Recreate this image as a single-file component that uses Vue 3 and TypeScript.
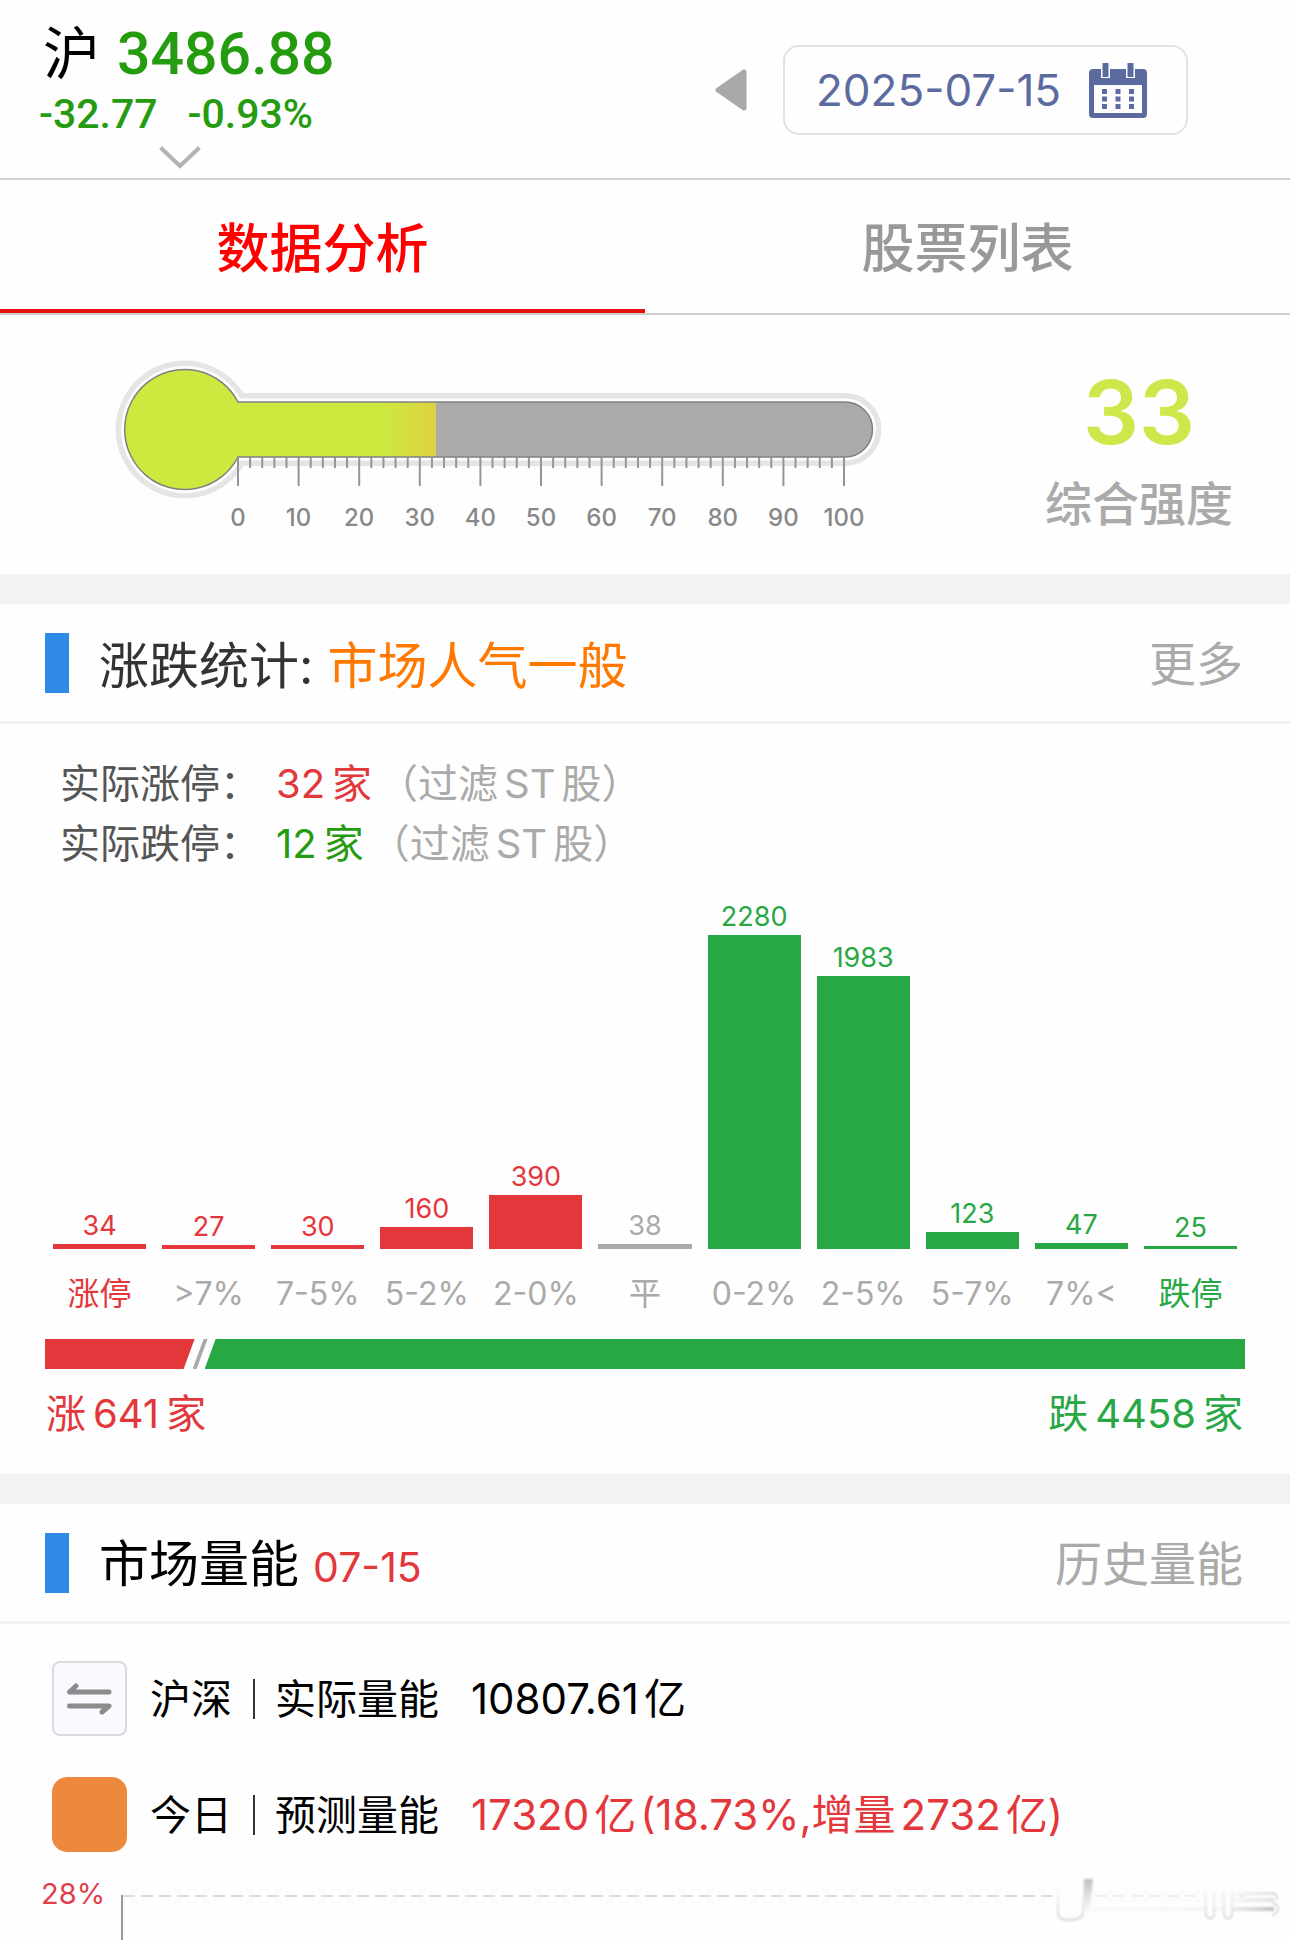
<script setup lang="ts">
import { ref } from 'vue'

type Tone = 'up' | 'down' | 'flat'

interface Bucket {
  label: string
  count: number
  tone: Tone
  edge?: boolean
}

const activeTab = ref(0)
const tabs = ['数据分析', '股票列表']
const tradeDate = ref('2025-07-15')

const buckets: Bucket[] = [
  { label: '涨停', count: 34, tone: 'up', edge: true },
  { label: '>7%', count: 27, tone: 'up' },
  { label: '7-5%', count: 30, tone: 'up' },
  { label: '5-2%', count: 160, tone: 'up' },
  { label: '2-0%', count: 390, tone: 'up' },
  { label: '平', count: 38, tone: 'flat' },
  { label: '0-2%', count: 2280, tone: 'down' },
  { label: '2-5%', count: 1983, tone: 'down' },
  { label: '5-7%', count: 123, tone: 'down' },
  { label: '7%<', count: 47, tone: 'down' },
  { label: '跌停', count: 25, tone: 'down', edge: true },
]
const tallest = 314
const peak = Math.max(...buckets.map((b) => b.count))
const barHeight = (count: number) => `${Math.round((count / peak) * tallest)}px`

const rising = 641
const falling = 4458

// Thermometer scale: 0 to 100 in steps of 2, labelled every 10
const strength = 33
const scaleStart = 123
const scaleLength = 606
const tickX = (value: number) => scaleStart + (value / 100) * scaleLength
const ticks = Array.from({ length: 51 }, (_, i) => i * 2)
const majors = ticks.filter((t) => t % 10 === 0)
const outline = 'M123 57 H730 A27.500 27.500 0 0 1 730 112 H123 A60 60 0 1 1 123 57 Z'
</script>

<template>
  <main class="page">
    <header class="top">
      <section class="index" aria-label="沪">
        <div class="index-main">
          <span class="market">沪</span>
          <strong class="points">3486.88</strong>
        </div>
        <div class="index-sub">
          <span>-32.77</span>
          <span>-0.93%</span>
        </div>
        <button class="expand" type="button" aria-label="展开">
          <svg width="42" height="23" viewBox="0 0 42 23">
            <path d="M1.500 1.500 L21 20 L40.500 1.500" fill="none" stroke="#b3b3b3" stroke-width="4" />
          </svg>
        </button>
      </section>
      <div class="date-nav">
        <button class="prev" type="button" aria-label="前一天">
          <svg width="32" height="42" viewBox="0 0 32 42">
            <path d="M3 21 L29 3 V39 Z" fill="#a9a9a9" stroke="#a9a9a9" stroke-width="5" stroke-linejoin="round" />
          </svg>
        </button>
        <label class="date-box">
          <input v-model="tradeDate" class="date-input" type="text" aria-label="日期" readonly />
          <svg width="58" height="55" viewBox="0 0 58 55">
            <rect x="0" y="6" width="58" height="49" rx="4" fill="#5b6b9f" />
            <rect x="5" y="22" width="48" height="28" fill="#fefefe" />
            <rect x="12" y="0" width="9" height="15" fill="#fefefe" />
            <rect x="37" y="0" width="9" height="15" fill="#fefefe" />
            <rect x="13.500" y="0" width="6" height="14" fill="#5b6b9f" />
            <rect x="38.500" y="0" width="6" height="14" fill="#5b6b9f" />
            <g fill="#5b6b9f">
              <template v-for="row in 3" :key="row">
                <rect v-for="col in 3" :key="col" :x="13 + (col - 1) * 13.500" :y="26 + (row - 1) * 7.500" width="5" height="5" />
              </template>
            </g>
          </svg>
        </label>
      </div>
    </header>

    <nav class="tabs" role="tablist">
      <button
        v-for="(tab, i) in tabs"
        :key="tab"
        type="button"
        role="tab"
        class="tab"
        :class="{ active: i === activeTab }"
        :aria-selected="i === activeTab"
        @click="activeTab = i"
      >
        {{ tab }}
      </button>
    </nav>

    <section class="strength">
      <svg class="thermo" viewBox="0 0 766 190" role="img" aria-label="综合强度 33">
        <defs>
          <linearGradient id="fill" gradientUnits="userSpaceOnUse" x1="268" y1="0" x2="321" y2="0">
            <stop offset="0" stop-color="#cde83e" />
            <stop offset="1" stop-color="#dfd142" />
          </linearGradient>
          <clipPath id="tube"><path :d="outline" /></clipPath>
        </defs>
        <path :d="outline" fill="#e5e5e5" stroke="#e5e5e5" stroke-width="18" stroke-linejoin="round" />
        <path :d="outline" fill="#fefefe" stroke="#fefefe" stroke-width="7" />
        <g clip-path="url(#tube)">
          <rect x="0" y="0" width="766" height="160" fill="#aaaaaa" />
          <rect x="0" y="0" :width="tickX(strength) - 2" height="160" fill="url(#fill)" />
        </g>
        <path :d="outline" fill="none" stroke="#808080" stroke-width="1.500" />
        <line
          v-for="t in ticks"
          :key="t"
          :x1="tickX(t)"
          :x2="tickX(t)"
          y1="112"
          :y2="t % 10 === 0 ? 141 : 123"
          stroke="#959595"
          stroke-width="2"
        />
        <text v-for="t in majors" :key="'l' + t" :x="tickX(t)" y="181" class="scale-label">{{ t }}</text>
      </svg>
      <div class="score">
        <strong>{{ strength }}</strong>
        <span>综合强度</span>
      </div>
    </section>

    <section class="block">
      <div class="head">
        <h2 class="head-title">涨跌统计: <em>市场人气一般</em></h2>
        <a class="more" href="#">更多</a>
      </div>

      <div class="limits">
        <p><span class="term">实际涨停：</span><b class="up-text"><i>32</i>家</b><span class="note">（过滤<i>ST</i>股）</span></p>
        <p><span class="term">实际跌停：</span><b class="fall-text"><i>12</i>家</b><span class="note">（过滤<i>ST</i>股）</span></p>
      </div>

      <ul class="chart">
        <li v-for="b in buckets" :key="b.label" :class="[b.tone, { edge: b.edge }]">
          <span class="count">{{ b.count }}</span>
          <span class="bar" :style="{ height: barHeight(b.count) }"></span>
          <span class="bucket">{{ b.label }}</span>
        </li>
      </ul>

      <div class="ratio">
        <span class="ratio-up" :style="{ flexGrow: rising }"></span>
        <span class="ratio-slash"></span>
        <span class="ratio-down" :style="{ flexGrow: falling }"></span>
      </div>
      <div class="totals">
        <span class="total-up">涨<i>{{ rising }}</i>家</span>
        <span class="total-down">跌<i>{{ falling }}</i>家</span>
      </div>
    </section>

    <section class="block volume">
      <div class="head">
        <h2 class="head-title dark">市场量能 <small>07-15</small></h2>
        <a class="more" href="#">历史量能</a>
      </div>

      <div class="rows">
        <div class="row">
          <span class="badge swap">
            <svg width="47" height="32" viewBox="0 0 47 32" fill="none" stroke="#8c8c8c" stroke-width="5" stroke-linecap="round" stroke-linejoin="round">
              <path d="M10 3 L3.500 9 H43" />
              <path d="M36 29 L43 23 H3.500" />
            </svg>
          </span>
          <span class="scope">沪深</span>
          <span class="kind">实际量能</span>
          <span class="value">10807.61<u>亿</u></span>
        </div>
        <div class="row">
          <span class="badge today"></span>
          <span class="scope">今日</span>
          <span class="kind">预测量能</span>
          <span class="value rise">17320<u>亿</u><span class="change">(18.73%,增量<i>2732</i>亿)</span></span>
        </div>
      </div>

      <div class="trend">
        <span class="trend-label">28%</span>
        <div class="plot"></div>
      </div>

      <svg class="watermark" width="230" height="56" viewBox="0 0 230 56" aria-hidden="true">
        <defs>
          <linearGradient id="streak" x1="0" x2="1" y1="0" y2="0">
            <stop offset="0" stop-color="#c8c8c8" stop-opacity="0.100" />
            <stop offset="0.700" stop-color="#c8c8c8" stop-opacity="0.200" />
            <stop offset="1" stop-color="#b0b0b0" />
          </linearGradient>
          <linearGradient id="post" x1="0" x2="0" y1="0" y2="1">
            <stop offset="0" stop-color="#bcbcbc" />
            <stop offset="1" stop-color="#dcdcdc" stop-opacity="0" />
          </linearGradient>
          <linearGradient id="cup" gradientUnits="userSpaceOnUse" x1="0" x2="0" y1="8" y2="46">
            <stop offset="0" stop-color="#e4e4e4" stop-opacity="0" />
            <stop offset="1" stop-color="#d0d0d0" />
          </linearGradient>
          <filter id="soft" x="-5%" y="-20%" width="110%" height="140%"><feGaussianBlur stdDeviation="1" /></filter>
        </defs>
        <rect x="2" y="10" width="226" height="34" fill="#fefefe" opacity="0.600" />
        <g filter="url(#soft)" fill="none">
          <path d="M8 10 V38 Q8 45 20 45 Q32 45 33 38 V14" fill="#fefefe" stroke="url(#cup)" stroke-width="2" />
          <path d="M34 4 H43 L39 42 H33 Z" fill="url(#post)" />
          <rect x="40" y="17" width="184" height="3" fill="url(#streak)" opacity="0.400" />
          <rect x="40" y="23" width="184" height="4" fill="url(#streak)" opacity="0.400" />
          <rect x="40" y="32" width="184" height="4" fill="url(#streak)" opacity="0.800" />
          <path d="M156 10 V41 Q160 46 164 41 V10" fill="#fefefe" stroke="url(#cup)" stroke-width="2" />
          <path d="M174 10 V41 Q178 46 182 41 V10" fill="#fefefe" stroke="url(#cup)" stroke-width="2" />
          <path d="M222 18 Q228 19 227 25 M223 28 Q229 30 228 35 Q227 39 222 40" stroke="#dadada" stroke-width="2" />
        </g>
      </svg>
    </section>
  </main>
</template>

<style>
body {
  margin: 0;
  background: #fefefe;
}
</style>

<style scoped>
.page {
  display: flex;
  flex-direction: column;
  height: 100vh;
  min-height: 1900px;
  overflow: hidden;
  background: #fefefe;
  color: #000;
  font-family: Inter, "Noto Sans CJK SC", sans-serif;
}
button {
  padding: 0;
  border: 0;
  background: none;
  font: inherit;
  cursor: pointer;
}
svg {
  display: block;
}
i,
em,
u {
  font-style: normal;
  text-decoration: none;
}
h2,
p,
ul {
  margin: 0;
  padding: 0;
}

.top {
  display: flex;
  justify-content: space-between;
  align-items: flex-start;
  height: 178px;
  flex: none;
  border-bottom: 2px solid #d0d0d0;
}
.index {
  padding: 22px 0 0 39px;
}
.index-main {
  display: flex;
  align-items: center;
  gap: 17px;
  height: 64px;
  padding-left: 4px;
}
.market {
  font-size: 57px;
  line-height: 64px;
}
.points {
  color: #259b10;
  font: 500 59px/64px Roboto, sans-serif;
}
.index-sub {
  display: flex;
  gap: 30px;
  color: #259b10;
  font: 500 41px/56px Roboto, sans-serif;
}
.expand {
  display: block;
  margin: 4px 0 0 120px;
}
.date-nav {
  display: flex;
  align-items: center;
  gap: 36px;
  margin: 45px 102px 0 0;
}
.date-box {
  display: flex;
  align-items: center;
  justify-content: space-between;
  box-sizing: border-box;
  width: 405px;
  height: 90px;
  padding: 0 39px 0 31px;
  border: 2px solid #e2e2e2;
  border-radius: 16px;
}
.date-input {
  width: 260px;
  padding: 0;
  border: 0;
  outline: 0;
  background: none;
  color: #5b6b9f;
  font: 400 44px/56px Inter, sans-serif;
}

.tabs {
  display: flex;
  flex: none;
  height: 133px;
  border-bottom: 2px solid #d0d0d0;
}
.tab {
  flex: 1;
  border-bottom: 4px solid transparent;
  color: #999;
  font-size: 53px;
  font-weight: 500;
}
.tab.active {
  border-color: #e60f0f;
  color: #f00;
}

.strength {
  display: flex;
  flex: none;
  align-items: flex-start;
  justify-content: space-between;
  height: 214px;
  padding: 30px 57px 15px 115px;
}
.thermo {
  width: 766px;
  height: 190px;
}
.scale-label {
  fill: #888;
  font: 500 24px Inter, sans-serif;
  text-anchor: middle;
}
.score {
  display: flex;
  flex-direction: column;
  align-items: center;
  gap: 6px;
  padding-top: 17px;
}
.score strong {
  color: #cde84a;
  font-size: 88px;
  font-weight: 600;
  line-height: 100px;
}
.score span {
  color: #aaa;
  font-size: 47px;
  font-weight: 500;
  line-height: 72px;
}

.block {
  flex: none;
  border-top: 30px solid #f2f2f2;
}
.head {
  display: flex;
  align-items: center;
  height: 117px;
  padding: 0 47px 0 45px;
  border-bottom: 3px solid #f1f1f1;
}
.head::before {
  content: "";
  width: 24px;
  height: 60px;
  margin-right: 30px;
  background: #2e8ae6;
}
.head-title {
  flex: 1;
  padding-top: 6px;
  color: #333;
  font-size: 50px;
  font-weight: 400;
  line-height: 72px;
}
.head-title em {
  color: #ff7800;
}
.head-title.dark {
  color: #000;
}
.head-title small {
  color: #e3373b;
  font-size: 41px;
}
.more {
  padding-top: 2px;
  color: #aaa;
  font-size: 47px;
  line-height: 72px;
  text-decoration: none;
}

.limits {
  padding: 30px 60px 0;
  font-size: 40px;
  line-height: 60px;
}
.limits p {
  display: flex;
}
.limits b {
  font-weight: 400;
}
.limits b i {
  margin-right: 7px;
}
.term {
  width: 216px;
  color: #555;
}
.note {
  margin-left: 6px;
  color: #aaa;
}
.note i {
  margin: 0 6px;
}
.up-text {
  color: #e3373b;
}
.fall-text {
  color: #259b10;
}

.chart {
  display: flex;
  align-items: flex-end;
  gap: 16px;
  height: 442px;
  padding: 0 53px;
  list-style: none;
}
.chart li {
  display: flex;
  flex: 1;
  flex-direction: column;
  align-items: center;
}
.count {
  font-size: 27px;
  line-height: 36px;
}
.bar {
  width: 100%;
  background: currentColor;
}
.bucket {
  margin-top: 23px;
  color: #aaa;
  font-size: 32px;
  line-height: 44px;
  white-space: nowrap;
}
.edge .bucket {
  color: inherit;
}
.up {
  color: #e3373b;
}
.down {
  color: #28a745;
}
.flat {
  color: #aaa;
}

.ratio {
  display: flex;
  height: 30px;
  padding: 23px 45px 0;
}
.ratio-up {
  flex-basis: 0;
  background: #e3373b;
  clip-path: polygon(0 0, 100% 0, calc(100% - 11px) 100%, 0 100%);
}
.ratio-slash {
  width: 15px;
  margin: 0 -3px 0 -2px;
  background: #aaa;
  clip-path: polygon(11px 0, 100% 0, 4px 100%, 0 100%);
}
.ratio-down {
  flex-basis: 0;
  background: #28a745;
  clip-path: polygon(11px 0, 100% 0, 100% 100%, 0 100%);
}
.totals {
  display: flex;
  justify-content: space-between;
  padding: 15px 47px 30px 46px;
  font-size: 40px;
  line-height: 60px;
}
.totals i {
  margin: 0 7px;
}
.total-up {
  color: #e3373b;
}
.total-down {
  color: #28a745;
}

.volume {
  display: flex;
  position: relative;
  flex: 1;
  flex-direction: column;
}
.volume .head {
  flex: none;
}
.rows {
  display: flex;
  flex-direction: column;
  gap: 41px;
  padding: 37px 52px 0;
}
.row {
  display: flex;
  align-items: center;
  height: 75px;
  font-size: 41px;
  line-height: 60px;
}
.badge {
  display: flex;
  align-items: center;
  justify-content: center;
  box-sizing: border-box;
  width: 75px;
  height: 75px;
  margin-right: 23px;
}
.swap {
  border: 2px solid #dadade;
  border-radius: 8px;
  background: #f9f9ff;
}
.today {
  border-radius: 15px;
  background: #ec893d;
}
.scope {
  padding-right: 21px;
}
.kind {
  display: flex;
  align-items: center;
}
.kind::before {
  content: "";
  width: 2px;
  height: 40px;
  margin-right: 20px;
  background: #333;
}
.value {
  margin-left: 32px;
  font-size: 42px;
}
.value u {
  margin-left: 5px;
}
.value i {
  margin: 0 5px;
}
.change {
  margin-left: 4px;
}
.rise {
  color: #e3373b;
}

.trend {
  display: flex;
  flex: 1;
  gap: 16px;
  padding: 24px 45px 0 41px;
}
.trend-label {
  width: 64px;
  color: #e0404c;
  font-size: 29px;
  line-height: 36px;
}
.plot {
  flex: 1;
  margin-top: 19px;
  border-left: 2px solid #999;
  background: repeating-linear-gradient(90deg, #dcdcdc 0 12px, transparent 12px 18px) 0 0 / 100% 2px no-repeat;
}
.watermark {
  position: absolute;
  right: 10px;
  bottom: 9px;
}
</style>
